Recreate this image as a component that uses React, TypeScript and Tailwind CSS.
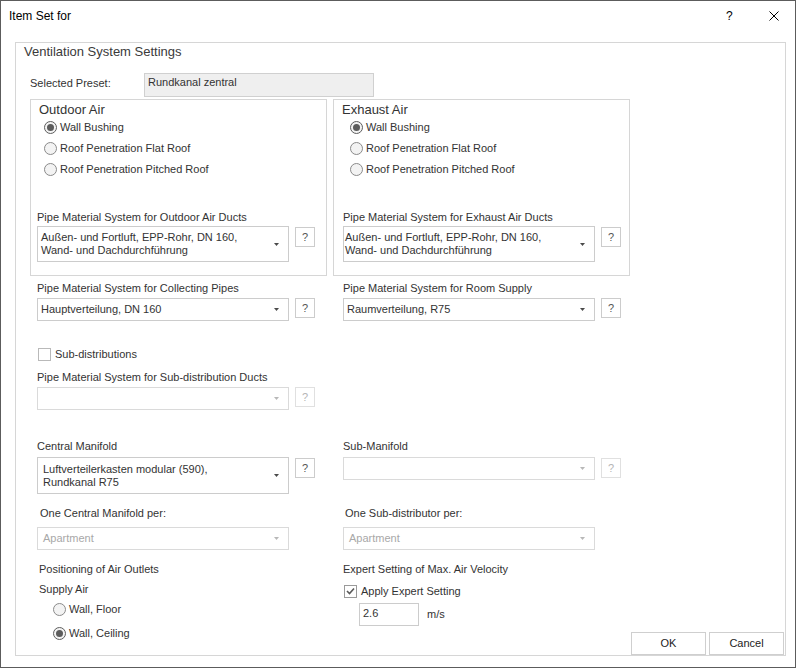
import React from 'react'

type ComboProps = {
  lines?: string[]
  disabled?: boolean
  h: string
  pl: string
}

function Arrow({ disabled }: { disabled?: boolean }) {
  return (
    <svg width="5" height="3" viewBox="0 0 5 3" className="shrink-0 mr-[9px]">
      <path d="M0 0H5L2.5 3Z" fill={disabled ? '#b8b8b8' : '#4a4a4a'} />
    </svg>
  )
}

function Combo({ lines = [], disabled, h, pl }: ComboProps) {
  return (
    <div className={`w-[252px] ${h} shrink-0 flex items-center border bg-white ${disabled ? 'border-[#dadada]' : 'border-[#cccccc]'}`}>
      <div className={`flex-1 ${pl} text-[11px] leading-[13px] ${disabled ? 'text-[#a8a8a8]' : 'text-[#333]'}`}>
        {lines.map((l) => (
          <div key={l}>{l}</div>
        ))}
      </div>
      <Arrow disabled={disabled} />
    </div>
  )
}

function Help({ disabled, top }: { disabled?: boolean; top?: boolean }) {
  return (
    <div
      className={`ml-[6px] w-[20px] h-[20px] shrink-0 flex items-center justify-center border text-[11px] ${top ? 'mt-[1px]' : ''} ${
        disabled ? 'border-[#e0e0e0] text-[#b5b5b5]' : 'border-[#cccccc] text-[#555]'
      }`}
    >
      ?
    </div>
  )
}

function Radio({ checked, label }: { checked?: boolean; label: string }) {
  return (
    <div className="flex items-center gap-[3px]">
      <div
        className={`w-[13px] h-[13px] rounded-full border flex items-center justify-center bg-[#f3f3f3] ${
          checked ? 'border-[#5e5e5e]' : 'border-[#8a8a8a]'
        }`}
      >
        {checked && <div className="w-[7px] h-[7px] rounded-full bg-[#5c5c5c]" />}
      </div>
      <span className="text-[11px] text-[#333]">{label}</span>
    </div>
  )
}

function Check({ checked }: { checked?: boolean }) {
  return (
    <div className={`w-[13px] h-[13px] shrink-0 border bg-white flex items-center justify-center ${checked ? 'border-[#9a9a9a]' : 'border-[#b9b9b9]'}`}>
      {checked && (
        <svg width="9" height="8" viewBox="0 0 9 8">
          <path d="M1 4L3.5 6.5L8 1.5" stroke="#5a5a5a" strokeWidth="1.6" fill="none" />
        </svg>
      )}
    </div>
  )
}

function Label({ children, className = '' }: { children: React.ReactNode; className?: string }) {
  return <div className={`h-[16px] leading-[16px] text-[11px] text-[#333] whitespace-nowrap ${className}`}>{children}</div>
}

function AirBox({ title, pipeLabel, radioPl, innerPl, textPl, className = '' }: { title: string; pipeLabel: string; radioPl: string; innerPl: string; textPl: string; className?: string }) {
  return (
    <div className={`w-[297px] h-[177px] border border-[#d6d6d6] ${className}`}>
      <div className="mt-[2px] pl-[8px] text-[13px] leading-[15px] text-[#333]">{title}</div>
      <div className={radioPl}>
        <div className="h-[21px] flex items-center">
          <Radio checked label="Wall Bushing" />
        </div>
        <div className="h-[21px] flex items-center">
          <Radio label="Roof Penetration Flat Roof" />
        </div>
        <div className="h-[21px] flex items-center">
          <Radio label="Roof Penetration Pitched Roof" />
        </div>
      </div>
      <div className={innerPl}>
        <Label className="mt-[29px]">{pipeLabel}</Label>
        <div className="mt-[1px] flex items-start">
          <Combo h="h-[36px]" pl={textPl} lines={['Außen- und Fortluft, EPP-Rohr, DN 160,', 'Wand- und Dachdurchführung']} />
          <Help top />
        </div>
      </div>
    </div>
  )
}

export default function App() {
  return (
    <div className="w-[796px] h-[668px] border border-[#5c5c5c] bg-white flex flex-col font-['Liberation_Sans',Arial,sans-serif] text-[#333]">
      {/* title bar */}
      <div className="h-[30px] shrink-0 flex items-center pl-[8px] text-[12px] text-black">
        <span className="flex-1">Item Set for</span>
        <span className="w-[7px]">?</span>
        <svg width="10" height="10" viewBox="0 0 10 10" className="ml-[36px] mr-[16px]">
          <path d="M0.5 0.5L9.5 9.5M9.5 0.5L0.5 9.5" stroke="#000" strokeWidth="1" />
        </svg>
      </div>

      {/* Ventilation System Settings */}
      <div className="mt-[11px] ml-[14px] w-[771px] h-[614px] border border-[#d6d6d6] flex flex-col">
        <div className="mt-[1px] pl-[8px] h-[16px] leading-[16px] text-[13px] text-[#3a3a3a]">Ventilation System Settings</div>

        <div className="mt-[13px] pl-[14px] flex items-start">
          <div className="w-[114px] mt-[2px] leading-[16px] text-[11px]">Selected Preset:</div>
          <div className="w-[230px] h-[24px] border border-[#d0d0d0] bg-[#efefef] pl-[3px] text-[11px] leading-[16px]">Rundkanal zentral</div>
        </div>

        <div className="mt-[2px] pl-[14px] flex">
          <AirBox title="Outdoor Air" pipeLabel="Pipe Material System for Outdoor Air Ducts" radioPl="pl-[13px]" innerPl="pl-[6px]" textPl="pl-[3px]" />
          <AirBox className="ml-[6px]" title="Exhaust Air" pipeLabel="Pipe Material System for Exhaust Air Ducts" radioPl="pl-[16px]" innerPl="pl-[9px]" textPl="pl-[1px]" />
        </div>

        <div className="pl-[21px] flex-1 flex flex-col">
          {/* pipes */}
          <div className="mt-[4px] grid grid-cols-[306px_1fr]">
            <div>
              <Label>Pipe Material System for Collecting Pipes</Label>
              <div className="mt-[2px] flex items-start">
                <Combo h="h-[23px]" pl="pl-[3px]" lines={['Hauptverteilung, DN 160']} />
                <Help />
              </div>
            </div>
            <div>
              <Label>Pipe Material System for Room Supply</Label>
              <div className="mt-[2px] flex items-start">
                <Combo h="h-[23px]" pl="pl-[3px]" lines={['Raumverteilung, R75']} />
                <Help />
              </div>
            </div>
          </div>

          {/* sub-distributions */}
          <div className="mt-[25px] h-[16px] flex items-center gap-[4px] pl-[1px]">
            <Check />
            <span className="text-[11px]">Sub-distributions</span>
          </div>
          <Label className="mt-[7px]">Pipe Material System for Sub-distribution Ducts</Label>
          <div className="mt-[2px] flex items-start">
            <Combo disabled h="h-[23px]" pl="pl-[3px]" />
            <Help disabled />
          </div>

          {/* manifolds */}
          <div className="mt-[28px] grid grid-cols-[306px_1fr] items-start">
            <div>
              <Label>Central Manifold</Label>
              <div className="mt-[3px] flex items-start">
                <Combo h="h-[37px]" pl="pl-[5px]" lines={['Luftverteilerkasten modular (590),', 'Rundkanal R75']} />
                <Help top />
              </div>
            </div>
            <div>
              <Label>Sub-Manifold</Label>
              <div className="mt-[3px] flex items-start">
                <Combo disabled h="h-[23px]" pl="pl-[3px]" />
                <Help disabled top />
              </div>
            </div>
          </div>

          <div className="mt-[11px] grid grid-cols-[306px_1fr]">
            <div>
              <Label className="pl-[3px]">One Central Manifold per:</Label>
              <div className="mt-[6px]">
                <Combo disabled h="h-[23px]" pl="pl-[5px]" lines={['Apartment']} />
              </div>
            </div>
            <div>
              <Label className="pl-[2px]">One Sub-distributor per:</Label>
              <div className="mt-[6px]">
                <Combo disabled h="h-[23px]" pl="pl-[5px]" lines={['Apartment']} />
              </div>
            </div>
          </div>

          {/* outlets / expert */}
          <div className="mt-[11px] flex-1 grid grid-cols-[306px_1fr]">
            <div>
              <Label className="pl-[2px]">Positioning of Air Outlets</Label>
              <Label className="mt-[4px] pl-[2px]">Supply Air</Label>
              <div className="pl-[16px]">
                <div className="h-[24px] flex items-center">
                  <Radio label="Wall, Floor" />
                </div>
                <div className="h-[24px] flex items-center">
                  <Radio checked label="Wall, Ceiling" />
                </div>
              </div>
            </div>
            <div className="flex justify-between pr-[1px]">
              <div>
                <Label>Expert Setting of Max. Air Velocity</Label>
                <div className="mt-[6px] h-[16px] flex items-center gap-[4px] pl-[1px]">
                  <Check checked />
                  <span className="text-[11px]">Apply Expert Setting</span>
                </div>
                <div className="mt-[4px] ml-[16px] flex items-center">
                  <div className="w-[60px] h-[23px] border border-[#cccccc] pl-[3px] pt-[1px] text-[11px] leading-[16px]">2.6</div>
                  <span className="ml-[8px] text-[11px]">m/s</span>
                </div>
              </div>
              <div className="self-end flex gap-[3px]">
                <div className="w-[75px] h-[23px] border border-[#cfcfcf] bg-white flex items-center justify-center text-[11px] text-[#222]">OK</div>
                <div className="w-[75px] h-[23px] border border-[#cfcfcf] bg-white flex items-center justify-center text-[11px] text-[#222]">Cancel</div>
              </div>
            </div>
          </div>
        </div>
      </div>
    </div>
  )
}
